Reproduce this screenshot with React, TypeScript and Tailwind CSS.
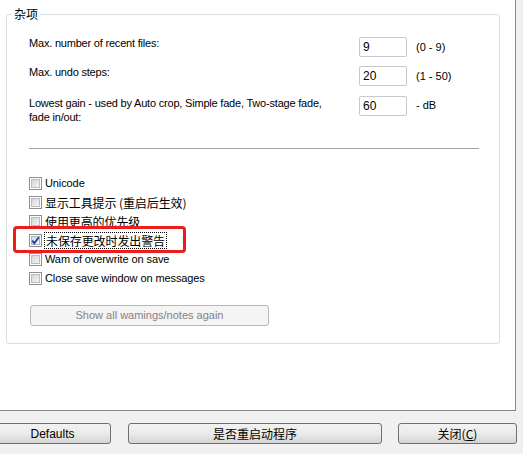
import React from "react";

const EN = { fontFamily: '"Liberation Sans", "Noto Sans CJK SC", sans-serif' };
const CJK = { fontFamily: '"Noto Sans CJK SC", "Liberation Sans", sans-serif' };

function Box({ checked }: { checked?: boolean }) {
  return (
    <div className="w-[13px] h-[13px] shrink-0 border border-[#8f8f8f] bg-white p-[1px]">
      <div
        className={
          checked
            ? "w-full h-full border border-[#a9b8cf] bg-gradient-to-br from-[#cbd7e8] to-[#f4f7fb] relative"
            : "w-full h-full border border-[#bcbcbc] bg-gradient-to-br from-[#d6d6d6] to-[#f4f4f4]"
        }
      >
        {checked && (
          <svg viewBox="0 0 9 9" className="absolute -left-[1px] -top-[1px] w-[9px] h-[9px]">
            <path d="M1.2 4.6 L3.3 7.2 L7.8 1.2" fill="none" stroke="#1f3d8c" strokeWidth="1.8" />
          </svg>
        )}
      </div>
    </div>
  );
}

function Check({
  label,
  checked,
  focus,
  cjk,
}: {
  label: string;
  checked?: boolean;
  focus?: boolean;
  cjk?: boolean;
}) {
  return (
    <div className="flex items-center h-[13px]">
      <Box checked={checked} />
      <span
        className={
          focus
            ? "ml-[2px] px-[1px] h-[17px] leading-[15px] border border-dotted border-black text-[12px] text-black"
            : cjk
            ? "ml-[3px] text-[12px] leading-[13px] text-black"
            : "ml-[3px] text-[11px] leading-[13px] text-black"
        }
        style={focus || cjk ? CJK : EN}
      >
        {label}
      </span>
    </div>
  );
}

function Btn({ children, className }: { children: React.ReactNode; className: string }) {
  return (
    <div
      className={
        "h-[21px] flex items-center justify-center rounded-[3px] border border-[#707070] bg-gradient-to-b from-[#f2f2f2] via-[#ebebeb] to-[#d4d4d4] text-[12px] text-black " +
        className
      }
      style={EN}
    >
      {children}
    </div>
  );
}

export default function App() {
  return (
    <div className="w-[523px] h-[454px] bg-[#f0f0f0] relative overflow-hidden" style={EN}>
      <div className="w-[516px] h-[411px] bg-white border-r border-b border-[#828790] pt-[6px] pl-[6px]">
        <fieldset className="w-[494px] h-[338px] border border-[#d5dfe5] rounded-[3px] pl-[5px] pr-[6px]">
          <legend className="px-[2px] text-[12px] leading-[16px] text-black" style={CJK}>
            杂项
          </legend>
          <div className="pl-[17px] pt-[15px]">
            <div className="flex items-start">
              <div className="w-[330px] text-[11px] leading-[13px] text-black tracking-[-0.2px]">
                Max. number of recent files:
              </div>
              <div className="w-[48px] h-[20px] border border-[#c5c8cf] rounded-[2px] text-[12px] leading-[18px] pl-[3px] text-black">
                9
              </div>
              <div className="ml-[9px] text-[11px] leading-[20px] text-black">(0 - 9)</div>
            </div>
            <div className="flex items-start mt-[9px]">
              <div className="w-[330px] text-[11px] leading-[13px] text-black tracking-[-0.2px]">
                Max. undo steps:
              </div>
              <div className="w-[48px] h-[20px] border border-[#c5c8cf] rounded-[2px] text-[12px] leading-[18px] pl-[3px] text-black">
                20
              </div>
              <div className="ml-[9px] text-[11px] leading-[20px] text-black">(1 - 50)</div>
            </div>
            <div className="flex items-start mt-[10px]">
              <div className="w-[330px] text-[11px] leading-[14px] text-black tracking-[-0.2px]">
                Lowest gain - used by Auto crop, Simple fade, Two-stage fade,
                <br />
                fade in/out:
              </div>
              <div className="w-[48px] h-[20px] border border-[#c5c8cf] rounded-[2px] text-[12px] leading-[18px] pl-[3px] text-black">
                60
              </div>
              <div className="ml-[9px] text-[11px] leading-[18px] text-black">- dB</div>
            </div>
            <div className="w-[450px] mt-[24px] border-t border-[#a0a0a0]"></div>
            <div className="mt-[28px] flex flex-col gap-[6px] tracking-[-0.1px]">
              <Check label="Unicode" />
              <Check label="显示工具提示 (重启后生效)" cjk />
              <Check label="使用更高的优先级" cjk />
              <Check label="未保存更改时发出警告" checked focus />
              <Check label="Wam of overwrite on save" />
              <Check label="Close save window on messages" />
            </div>
            <div className="mt-[20px] ml-[1px] w-[239px] h-[21px] rounded-[3px] border border-[#b5b9bc] bg-[#f4f4f4] flex items-center justify-center text-[11px] text-[#838383]">
              Show all wamings/notes again
            </div>
          </div>
        </fieldset>
      </div>
      <div className="flex mt-[12px] -ml-[6px]">
        <Btn className="w-[117px]">Defaults</Btn>
        <Btn className="w-[254px] ml-[17px]">
          <span style={CJK}>是否重启动程序</span>
        </Btn>
        <Btn className="w-[119px] ml-[16px]">
          <span style={CJK}>
            关闭(<span className="underline">C</span>)
          </span>
        </Btn>
      </div>
      <div className="absolute left-[13px] top-[226px] w-[173px] h-[27px] border-[3px] border-[#ee1c1c] rounded-[4px]"></div>
    </div>
  );
}
